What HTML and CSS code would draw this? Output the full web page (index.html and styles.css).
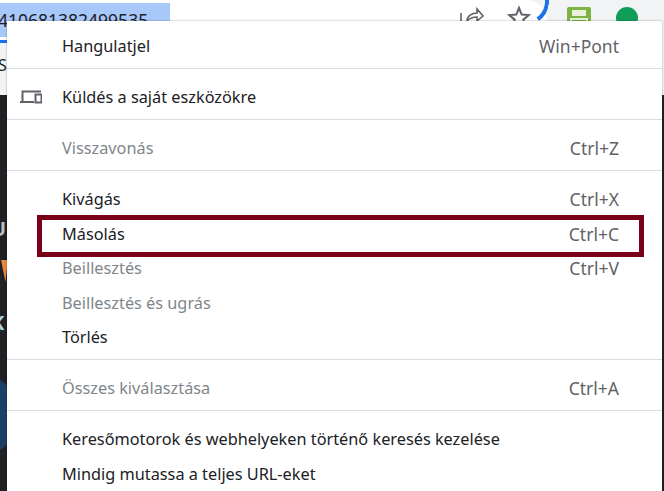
FILE: index.html
```html
<!DOCTYPE html>
<html lang="hu">
<head>
<meta charset="utf-8">
<title>Helyi menü</title>
<link rel="stylesheet" href="styles.css">
</head>
<body>
<div class="page">
  <header class="toolbar">
    <div class="address"><span class="url">410681382499535</span></div>
    <svg class="tool tool-share" width="26" height="20" viewBox="0 0 26 20"><path d="M2 7v13M8 15c0-5 5-8 10-8V3l6 7-6 5v-4c-3 0-7 1-10 4z" fill="none" stroke="#5f6368" stroke-width="1.600"/></svg>
    <svg class="tool tool-star" width="24" height="24" viewBox="0 0 24 24"><path d="M12 3l2.700 6.600 7.100.5-5.500 4.600 1.800 7L12 17.900 5.900 21.700l1.800-7L2.200 10.100l7.100-.5z" fill="none" stroke="#5f6368" stroke-width="2"/></svg>
    <div class="focus-ring"></div>
    <div class="ext-print"><div class="ext-print-top"></div><div class="ext-print-body"></div></div>
    <div class="avatar"></div>
  </header>
  <div class="strip">
    <span class="strip-char">S</span>
  </div>
  <main class="content">
    <div class="blob"></div>
    <span class="frag frag-u">U</span>
    <svg class="frag-orange" width="7" height="26" viewBox="0 0 7 26"><path d="M1 2h6v8L5.500 24z" fill="#e8873a"/></svg>
    <span class="frag frag-k">K</span>
  </main>

  <nav class="menu">
    <section class="group group-first">
      <div class="row"><span>Hangulatjel</span><span class="key">Win+Pont</span></div>
    </section>
    <section class="group">
      <div class="row">
        <svg class="row-icon" width="22" height="16" viewBox="0 0 22 16"><path d="M2.500 12V2.500H21M0 13h14" fill="none" stroke="#5f6368" stroke-width="2"/><rect x="15.500" y="5.500" width="6" height="8" fill="none" stroke="#5f6368" stroke-width="2"/></svg>
        <span>Küldés a saját eszközökre</span>
      </div>
    </section>
    <section class="group">
      <div class="row off"><span>Visszavonás</span><span class="key">Ctrl+Z</span></div>
    </section>
    <section class="group">
      <div class="row"><span>Kivágás</span><span class="key">Ctrl+X</span></div>
      <div class="row marked"><span>Másolás</span><span class="key">Ctrl+C</span></div>
      <div class="row off"><span>Beillesztés</span><span class="key">Ctrl+V</span></div>
      <div class="row off"><span>Beillesztés és ugrás</span></div>
      <div class="row"><span>Törlés</span></div>
    </section>
    <section class="group">
      <div class="row off"><span>Összes kiválasztása</span><span class="key">Ctrl+A</span></div>
    </section>
    <section class="group group-last">
      <div class="row"><span>Keresőmotorok és webhelyeken történő keresés kezelése</span></div>
      <div class="row"><span>Mindig mutassa a teljes URL-eket</span></div>
    </section>
  </nav>
</div>
</body>
</html>
```
FILE: styles.css
```css
* { box-sizing: border-box; }
html, body { margin: 0; height: 100%; }
body { overflow: hidden; font-family: "Noto Sans", "Open Sans", sans-serif; background: #202124; }
.page { position: relative; width: 664px; height: 491px; overflow: hidden; display: flex; flex-direction: column; }

.toolbar { position: relative; height: 43px; flex: none; background: #f1f3f4; }
.address { position: absolute; left: 0; top: 0; width: 547px; height: 43px; background: #fff; border-bottom: 3px solid #1a73e8; border-radius: 0 21px 21px 0; }
.url { display: block; width: 170px; height: 34px; margin-top: 3px; background: #a8c7fa; color: #202124; font-size: 17.500px; line-height: 34px; text-indent: -2px; overflow: hidden; }
.tool { position: absolute; }
.tool-share { left: 459px; top: 6px; }
.tool-star { left: 507px; top: 5px; }
.focus-ring { position: absolute; left: 502px; top: -22px; width: 47px; height: 47px; border: 4px solid #1a73e8; border-left-color: transparent; border-bottom-color: transparent; border-radius: 50%; transform: rotate(10deg); }
.ext-print { position: absolute; left: 567px; top: 7px; width: 24px; height: 24px; background: #7cb342; border-radius: 2px; }
.ext-print-top { width: 14px; height: 6px; margin: 3px auto 0; background: #e8f2d8; }
.ext-print-body { width: 18px; height: 8px; margin: 2px auto 0; border: 2px solid #e8f2d8; }
.avatar { position: absolute; left: 616px; top: 7px; width: 22px; height: 22px; border-radius: 50%; background: #0f9d58; }

.strip { height: 52px; flex: none; background: #f1f3f4; position: relative; }
.strip-char { position: absolute; left: -2px; top: 12px; font-size: 16px; line-height: 20px; color: #202124; }

.content { position: relative; flex: 1; background: #202124; }
.blob { position: absolute; left: -70px; top: 278px; width: 90px; height: 84px; border-radius: 50%; background: #1d3f66; }
.frag { position: absolute; font-weight: 700; font-size: 20px; line-height: 24px; }
.frag-u { top: 122px; left: -9px; color: #bdbdbd; }
.frag-orange { position: absolute; left: 0; top: 163px; }
.frag-k { top: 216px; left: -9px; color: #a8d4e4; }

.menu { position: absolute; left: 7px; top: 21px; right: 2px; height: 480px; background: #fff; box-shadow: 0 0 2px rgba(0,0,0,.35); }
.group { padding: 11px 0 4.500px; border-bottom: 1px solid #dadce0; }
.group-first { padding-top: 8px; }
.group-last { border-bottom: 0; }
.row { position: relative; display: flex; justify-content: space-between; align-items: center; height: 34.500px; padding: 0 43px 0 55px; font-size: 16.300px; color: #202124; white-space: nowrap; }
.row.off { color: #80868b; }
.key { color: #5f6368; font-size: 17.500px; }
.row-icon { position: absolute; left: 13px; top: 9px; }
.marked::after { content: ""; position: absolute; left: 30px; right: 18px; top: -1.500px; bottom: -6px; border: 5px solid #7a0019; }
```
